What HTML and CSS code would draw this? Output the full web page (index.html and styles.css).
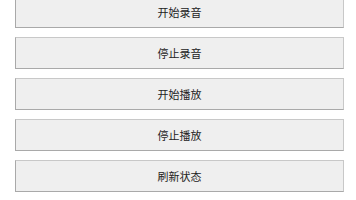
FILE: index.html
```html
<!DOCTYPE html>
<html>
<head>
<meta charset="utf-8">
<link rel="stylesheet" href="styles.css">
</head>
<body>
<div class="panel">
  <button class="btn">开始录音</button>
  <button class="btn">停止录音</button>
  <button class="btn">开始播放</button>
  <button class="btn">停止播放</button>
  <button class="btn">刷新状态</button>
</div>
</body>
</html>
```
FILE: styles.css
```css
html, body {
  margin: 0;
  padding: 0;
  background: #ffffff;
}
.panel {
  display: flex;
  flex-direction: column;
  gap: 9px;
  padding: 0 12px 0 15px;
  margin-top: -4px;
}
.btn {
  height: 32px;
  box-sizing: border-box;
  background: #efefef;
  border: 1px solid #c8c8c8;
  border-left-color: #a9a9a9;
  border-bottom-color: #a9a9a9;
  font-family: "Noto Sans CJK SC", sans-serif;
  font-size: 11px;
  color: #222;
  padding: 0 0 1px 0;
  margin: 0;
}
```
